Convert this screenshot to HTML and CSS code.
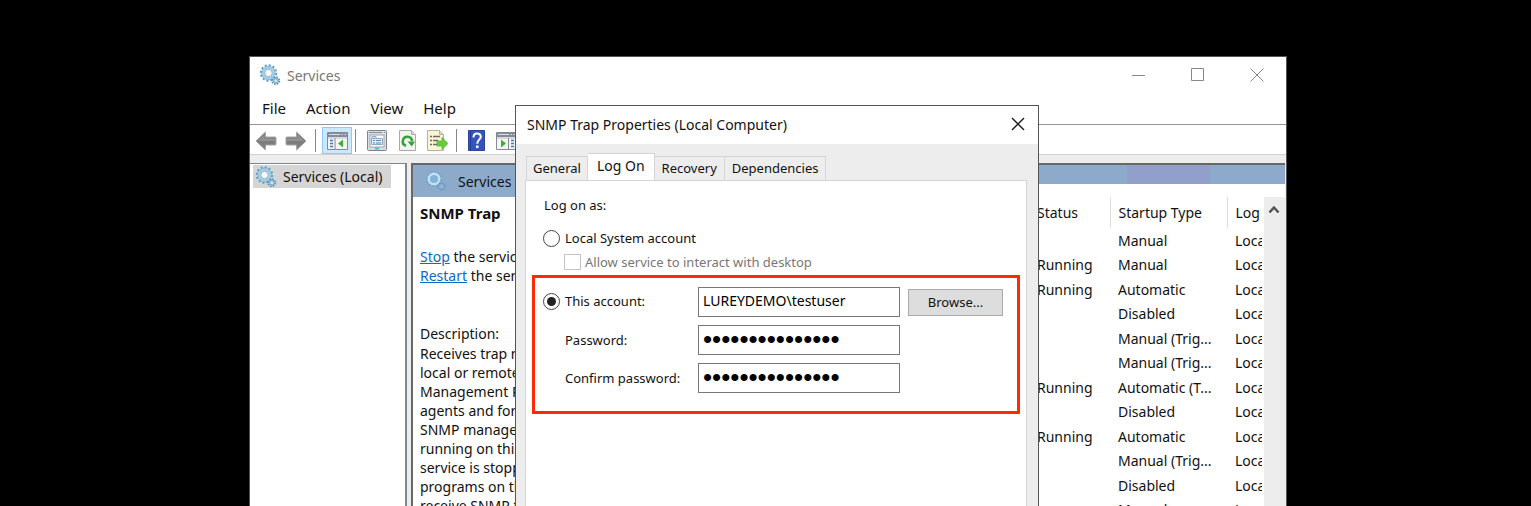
FILE: index.html
```html
<!DOCTYPE html>
<html lang="en">
<head>
<meta charset="utf-8">
<title>Services</title>
<link rel="stylesheet" href="styles.css">
</head>
<body>
<svg class="defs" aria-hidden="true">
  <symbol id="gears" viewBox="0 0 22 22">
    <circle cx="9.500" cy="9" r="7.600" fill="none" stroke="#5c9cc4" stroke-width="2.200" stroke-dasharray="2 1.980"/>
    <circle cx="9.500" cy="9" r="5.400" fill="none" stroke="#a5d0e8" stroke-width="3"/>
    <circle cx="9.500" cy="9" r="6.800" fill="none" stroke="#78aed0" stroke-width=".7"/>
    <circle cx="9.500" cy="9" r="3.800" fill="#f4f8fb" stroke="#7098b0" stroke-width=".7"/>
    <circle cx="16.800" cy="16.800" r="3.500" fill="none" stroke="#5a90b5" stroke-width="2" stroke-dasharray="1.500 1.250"/>
    <circle cx="16.800" cy="16.800" r="2.300" fill="#d5e7f1" stroke="#80b2d0" stroke-width="1.600"/>
  </symbol>
  <symbol id="gears-pale" viewBox="0 0 22 22">
    <circle cx="9" cy="9" r="7" fill="none" stroke="#6ba3cb" stroke-width="2" stroke-dasharray="1.800 1.860"/>
    <circle cx="9" cy="9" r="5.300" fill="#86b2d8" stroke="#c3e2f1" stroke-width="2.400"/>
    <circle cx="16.500" cy="16.500" r="3.200" fill="none" stroke="#6295ba" stroke-width="2" stroke-dasharray="1.300 1.210"/>
    <circle cx="16.500" cy="16.500" r="1.800" fill="#96b5cf" stroke="#8abbd9" stroke-width="1"/>
  </symbol>
  <symbol id="arrow" viewBox="0 0 22 20">
    <path d="M1 10 10.500 1v5H20q1 0 1 1v6q0 1-1 1h-9.500v5z" fill="#7d7d7d" stroke="#a6a6a6" stroke-width="1"/>
    <path d="M3 10 9.500 4v3.500H20v2.500z" fill="#929292"/>
  </symbol>
  <symbol id="panel" viewBox="0 0 21 18">
    <path d="M.5.5h20v17H.5z" fill="#f5f5f5" stroke="#858993"/>
    <path d="M1 1h19v4H1z" fill="#858b99"/>
    <path d="M2 2.500h11M14.500 2.500h1.500M17.500 2.500h1.500" stroke="#d9dde5"/>
    <path d="M1 6h19" stroke="#b8bdc6"/>
  </symbol>
</svg>
<main class="desktop">
  <section class="window" aria-label="Services">
    <header class="titlebar">
      <svg class="gear"><use href="#gears"/></svg>
      <span class="title">Services</span>
      <div class="controls">
        <button aria-label="Minimize"><svg viewBox="0 0 14 14"><path d="M0 7.500h13"/></svg></button>
        <button aria-label="Maximize"><svg viewBox="0 0 14 14"><path d="M.5.5h12v12H.5z"/></svg></button>
        <button aria-label="Close"><svg viewBox="0 0 14 14"><path d="m.5.5 13 13m0-13-13 13"/></svg></button>
      </div>
    </header>
    <nav class="menu">
      <button>File</button><button>Action</button><button>View</button><button>Help</button>
    </nav>
    <div class="toolbar">
      <button aria-label="Back"><svg width="22" height="20"><use href="#arrow"/></svg></button>
      <button aria-label="Forward"><svg width="22" height="20" viewBox="0 0 22 20"><g transform="matrix(-1 0 0 1 22 0)"><use href="#arrow" width="22" height="20"/></g></svg></button>
      <i class="sep"></i>
      <button class="pressed" aria-label="Show console tree"><svg width="21" height="18"><use href="#panel"/><path d="M8 6v12" stroke="#858993"/><path d="M3 8.500h3M3 11.500h3M3 14.500h3" stroke="#4179bd" stroke-width="1.500"/><path d="m11 11.500 5-4v8z" fill="#39b52b"/></svg></button>
      <i class="sep"></i>
      <button aria-label="Properties"><svg width="20" height="21"><rect x=".5" y=".5" width="19" height="20" rx="1" fill="#d9dde1" stroke="#7c858d"/><path d="M2 2.500h13M17 2.500h1" stroke="#87919b"/><rect x="3" y="5" width="14" height="12" fill="#fff" stroke="#9ca6af"/><path d="M5 6.500h4v2H5zM4.500 8.500h11v6h-11z" fill="#e2edf6" stroke="#91a8bb"/><path d="M6 10.500h2M6 13h2M9 10.500h5M9 13h5" stroke="#5c86ab"/><path d="M8 18.500h4" stroke="#43bde1" stroke-width="2"/></svg></button>
      <button class="wide" aria-label="Refresh"><svg width="17" height="21"><path d="M.5.5h12l4 4v16H.5z" fill="#f4f4ef" stroke="#aaa"/><path d="M12.500.5v4h4" fill="#ddd" stroke="#aaa"/><path d="M7 15.800A4.600 4.600 0 1 1 13 11" fill="none" stroke="#30a33a" stroke-width="2.500"/><path d="M8.500 11.500h7.500l-3.200 5z" fill="#30a33a"/></svg></button>
      <button aria-label="Export list"><svg width="21" height="21"><path d="M.5.5h12l4 4v16H.5z" fill="#faf5d4" stroke="#b8b294"/><path d="M12.500.5v4h4" fill="#ddd8b8" stroke="#b8b294"/><path d="M3 6.500h2M3 10.500h2M3 14.500h2M6 6.500h7M6 10.500h5M6 14.500h5" stroke="#6e6b68" stroke-width="1.500"/><path d="M10 11h5V7.500l6 6-6 6V16h-5z" fill="#68cd3b" stroke="#48ae30" stroke-width=".7"/></svg></button>
      <i class="sep"></i>
      <button class="wide" aria-label="Help"><svg width="17" height="21"><path d="M.5.5h16v20H.5z" fill="#3555bd" stroke="#2944a0"/><path d="M2.500 1v19" stroke="#203b94"/><path d="M5.500 7.500Q5.500 3.500 9 3.500t3.800 3.200c0 3-3.600 3-3.600 7" fill="none" stroke="#fff" stroke-width="2"/><path d="M8 15.500h2.500v2.500H8z" fill="#fff"/></svg></button>
      <button aria-label="Show action pane"><svg width="21" height="18"><use href="#panel"/><path d="M12.500 6v12" stroke="#858993"/><path d="M15 8.500h3M15 11.500h3M15 14.500h3" stroke="#4179bd" stroke-width="1.500"/><path d="m5 7.500 5 4-5 4z" fill="#39b52b"/></svg></button>
    </div>
    <div class="panes">
      <aside class="tree">
        <button class="node"><svg class="gear"><use href="#gears"/></svg><span>Services (Local)</span></button>
      </aside>
      <div class="detail">
        <div class="info">
          <h2 class="info-head"><svg class="gear"><use href="#gears-pale"/></svg>Services</h2>
          <div class="info-body">
            <h3>SNMP Trap</h3>
            <p class="actions"><a href="#stop">Stop</a> the service<br><a href="#restart">Restart</a> the service</p>
            <p>Description:</p>
            <p class="description">Receives trap messages generated by<br>local or remote Simple Network<br>Management Protocol (SNMP)<br>agents and forwards the messages to<br>SNMP management programs<br>running on this computer. If this<br>service is stopped, SNMP-based<br>programs on this computer will not<br>receive SNMP trap messages.</p>
          </div>
        </div>
        <div class="list">
          <div class="band"><i></i></div>
          <div class="list-body">
            <table>
              <colgroup><col class="c-status"><col class="c-type"><col class="c-log"></colgroup>
              <thead><tr><th>Status</th><th>Startup Type</th><th>Log</th></tr></thead>
              <tbody>
                <tr><td></td><td>Manual</td><td>Local</td></tr>
                <tr><td>Running</td><td>Manual</td><td>Local</td></tr>
                <tr><td>Running</td><td>Automatic</td><td>Local</td></tr>
                <tr><td></td><td>Disabled</td><td>Local</td></tr>
                <tr><td></td><td>Manual (Trig...</td><td>Local</td></tr>
                <tr><td></td><td>Manual (Trig...</td><td>Local</td></tr>
                <tr><td>Running</td><td>Automatic (T...</td><td>Local</td></tr>
                <tr><td></td><td>Disabled</td><td>Local</td></tr>
                <tr><td>Running</td><td>Automatic</td><td>Local</td></tr>
                <tr><td></td><td>Manual (Trig...</td><td>Local</td></tr>
                <tr><td></td><td>Disabled</td><td>Local</td></tr>
                <tr><td></td><td>Manual</td><td>Local</td></tr>
              </tbody>
            </table>
            <div class="scroll"><button aria-label="Scroll up"><svg width="12" height="9"><path d="m1.500 7.500 4.500-5 4.500 5" fill="none" stroke="#555" stroke-width="2.500"/></svg></button></div>
          </div>
        </div>
      </div>
    </div>

    <section class="dialog" role="dialog" aria-labelledby="dialog-title">
      <header class="dialog-title">
        <span id="dialog-title">SNMP Trap Properties (Local Computer)</span>
        <button aria-label="Close"><svg width="14" height="14"><path d="m1 1 12 12m0-12-12 12" stroke="#222" stroke-width="1.500"/></svg></button>
      </header>
      <div class="tabs" role="tablist">
        <button role="tab">General</button><button role="tab" class="active" aria-selected="true">Log On</button><button role="tab">Recovery</button><button role="tab">Dependencies</button>
      </div>
      <form class="page" role="tabpanel">
        <p class="caption">Log on as:</p>
        <label class="choice"><input type="radio" name="account">Local System account</label>
        <label class="choice interact"><input type="checkbox" disabled>Allow service to interact with desktop</label>
        <div class="account">
          <label class="choice"><input type="radio" name="account" checked>This account:</label>
          <input class="field" type="text" value="LUREYDEMO\testuser" aria-label="Account name">
          <button class="browse" type="button">Browse...</button>
          <label class="name" for="pw">Password:</label>
          <input class="field secret" id="pw" type="password" value="abcdefghijklmno">
          <label class="name" for="pw2">Confirm password:</label>
          <input class="field secret" id="pw2" type="password" value="abcdefghijklmno">
        </div>
      </form>
    </section>
  </section>
</main>
</body>
</html>
```
FILE: styles.css
```css
* { box-sizing: border-box; }
body {
  margin: 0;
  background: #000;
  color: #111;
  font: 14px/19px "Noto Sans", "Open Sans", sans-serif;
}
button {
  padding: 0;
  border: 0;
  background: none;
  color: inherit;
  font: inherit;
}
svg { display: block; }
p, h2, h3 { margin: 0; }
.defs { position: absolute; width: 0; height: 0; }
.gear { width: 22px; height: 22px; flex: none; }

.desktop {
  display: flex;
  height: 100vh;
  padding: 56px 244px 0 249px;
  overflow: hidden;
}
.window {
  position: relative;
  display: flex;
  flex: 1;
  flex-direction: column;
  min-width: 0;
  border: 1px solid #555;
  border-bottom: 0;
  background: #fff;
}
.titlebar {
  display: flex;
  align-items: center;
  height: 36px;
  padding-left: 9px;
  flex: none;
}
.title { margin-left: 6px; color: #777; }
.controls { display: flex; margin-left: auto; }
.controls button {
  display: grid;
  place-items: center;
  width: 59px;
  height: 36px;
}
.controls svg { width: 14px; height: 14px; fill: none; stroke: #888; }
.menu {
  display: flex;
  gap: 20px;
  height: 32px;
  padding: 0 12px;
  border-bottom: 1px solid #929297;
  font-size: 15px;
  flex: none;
}
.toolbar {
  display: flex;
  align-items: center;
  height: 30px;
  padding: 2px 0 0 5px;
  border-bottom: 1px solid #d0d0d0;
  flex: none;
}
.toolbar button { display: grid; place-items: center; margin-right: 8px; }
.toolbar .pressed {
  width: 30px;
  height: 27px;
  margin-right: 3px;
  border: 1px solid #8fcaf5;
  background: #cce8ff;
}
.toolbar button:nth-of-type(4) { margin-right: 12px; }
.toolbar .wide { margin-right: 11px; }
.sep { width: 1px; height: 23px; margin-right: 11px; background: #888; }
.sep:first-of-type { margin-right: 6px; }

.panes {
  display: flex;
  flex: 1;
  gap: 4px;
  min-height: 0;
  padding: 8px 1px 0 0;
  background: #ededed;
}
.tree {
  width: 157px;
  border: 1px solid #7e8790;
  border-width: 1px 2px 0 0;
  background: #fff;
  flex: none;
}
.node {
  display: flex;
  align-items: center;
  gap: 6px;
  height: 23px;
  margin: 1px 0 0 3px;
  padding: 0 9px 0 2px;
  background: #d5d5d5;
}
.detail {
  display: flex;
  flex: 1;
  min-width: 0;
  border: 2px solid #686868;
  border-width: 2px 0 0 2px;
  background: #fff;
  overflow: hidden;
}
.info { flex: 1; min-width: 0; white-space: nowrap; }
.info-head {
  display: flex;
  align-items: center;
  gap: 11px;
  height: 32px;
  padding-left: 12px;
  background: #8eaacb;
  font-size: 14px;
  font-weight: 400;
}
.info-body { padding: 7px; }
h3 { font-size: 15px; line-height: 19px; }
.actions { margin: 24px 0 39px; }
a { color: #0a6ac8; }
.description { margin-top: 1px; }
.list { display: flex; flex-direction: column; width: 257px; flex: none; }
.band { height: 19px; padding-left: 99px; background: #8eaacb; flex: none; }
.band i { display: block; width: 83px; height: 19px; background: #929fca; }
.list-body {
  display: flex;
  flex: 1;
  gap: 2px;
  min-height: 0;
  margin-top: 13px;
  overflow: hidden;
}
table {
  flex: 1;
  width: 100%;
  min-width: 0;
  height: max-content;
  border-collapse: collapse;
  table-layout: fixed;
}
.c-status { width: 82px; }
.c-type { width: 117px; }
th, td {
  height: 24px;
  padding: 0 0 0 8px;
  overflow: hidden;
  font-weight: 400;
  text-align: left;
  white-space: nowrap;
}
th:first-child, td:first-child { padding-left: 9px; }
th { height: 31px; border-right: 1px solid #ddd; }
th:last-child { border: 0; }
tr:nth-child(even) td { height: 25px; }
.scroll { width: 21px; background: #ededed; flex: none; }
.scroll button { display: grid; place-items: center; width: 19px; height: 24px; }

.dialog {
  position: absolute;
  top: 48px;
  bottom: 0;
  left: 265px;
  display: flex;
  flex-direction: column;
  width: 524px;
  border: 1px solid #555;
  border-bottom: 0;
  background: #ededed;
}
.dialog-title {
  display: flex;
  align-items: center;
  justify-content: space-between;
  height: 38px;
  padding: 0 13px 2px 11px;
  background: #fff;
  flex: none;
}
.tabs {
  display: flex;
  align-items: flex-end;
  height: 36px;
  padding: 0 10px;
  font-size: 13px;
  flex: none;
}
.tabs button {
  height: 24px;
  padding: 0 7px;
  border: 1px solid #d5d5d5;
  border-width: 1px 1px 0 0;
}
.tabs button:first-child { padding: 0 6px; border-left-width: 1px; }
.tabs .active { height: 27px; padding: 0 9px 4px; background: #fff; font-size: 14px; }
.page {
  flex: 1;
  min-height: 0;
  margin: 0 11px 0 9px;
  border: 1px solid #d5d5d5;
  border-width: 1px 1px 0;
  background: #fff;
  font-size: 13px;
}
.caption { margin: 15px 0 13px 18px; }
.choice { display: flex; align-items: center; gap: 5px; height: 20px; padding-left: 17px; }
.interact { margin: 4px 0 3px; padding-left: 38px; gap: 4px; color: #777; }
.choice input { appearance: none; margin: 0; background: #fff; flex: none; }
.choice input[type="radio"] {
  display: grid;
  place-items: center;
  width: 17px;
  height: 17px;
  border: 1px solid #444;
  border-radius: 50%;
}
.choice input:checked::before {
  width: 9px;
  height: 9px;
  border-radius: 50%;
  background: #222;
  content: "";
}
.choice input[type="checkbox"] { width: 17px; height: 16px; border: 1px solid #c4c4c4; }
.account {
  display: grid;
  grid-template-columns: 155px 202px 95px;
  gap: 8px;
  align-items: center;
  margin: 0 6px;
  padding: 9px 0 18px;
  border: 3px solid #ff2a0a;
}
.account .choice { padding: 0 0 2px 8px; }
.name { grid-column: 1; padding-left: 30px; white-space: nowrap; }
.field {
  width: 100%;
  height: 30px;
  padding: 0 4px 4px;
  border: 1px solid #777;
  outline: 0;
  background: #fff;
  color: #000;
  font: inherit;
  font-size: 14px;
}
.secret { padding-bottom: 2px; font: 26px/26px "Liberation Sans", sans-serif; }
.browse { height: 27px; border: 1px solid #aaa; background: #ddd; }
```
